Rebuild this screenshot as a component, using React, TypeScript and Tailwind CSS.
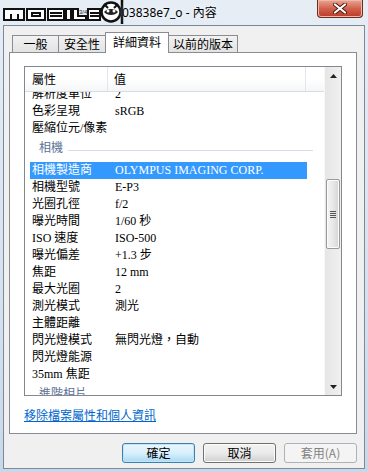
import React from "react";

const CJK = '"Noto Sans CJK TC", "Noto Sans", sans-serif';
const LIST = '"Liberation Serif", "Noto Sans CJK TC", serif';

const rows: [string, string][] = [
  ["解析度單位", "2"],
  ["色彩呈現", "sRGB"],
  ["壓縮位元/像素", ""],
];
const camera: [string, string][] = [
  ["相機製造商", "OLYMPUS IMAGING CORP."],
  ["相機型號", "E-P3"],
  ["光圈孔徑", "f/2"],
  ["曝光時間", "1/60 秒"],
  ["ISO 速度", "ISO-500"],
  ["曝光偏差", "+1.3 步"],
  ["焦距", "12 mm"],
  ["最大光圈", "2"],
  ["測光模式", "測光"],
  ["主體距離", ""],
  ["閃光燈模式", "無閃光燈，自動"],
  ["閃光燈能源", ""],
  ["35mm 焦距", ""],
];

function Row({ name, value, selected }: { name: string; value: string; selected?: boolean }) {
  return (
    <div
      className={
        "ml-[5px] flex h-[17px] w-[277px] items-center whitespace-nowrap text-[12px] leading-[17px] " +
        (selected ? "bg-[#3399ff] text-white" : "text-black")
      }
    >
      <div className="w-[78px] pl-[2px]">{name}</div>
      <div className="pl-[7px]">{value}</div>
    </div>
  );
}

function Group({ label }: { label: string }) {
  return (
    <div className="flex h-[25px] items-center pb-[3px] pl-[14px] pr-[11px]">
      <span className="text-[12px] leading-[17px] text-[#5d7396]">{label}</span>
      <div className="ml-[5px] mt-[4px] h-px flex-1 bg-[#d3dce8]" />
    </div>
  );
}

function Logo() {
  return (
    <svg width="126" height="25" viewBox="0 0 126 25" className="block">
      <g fill="#fff" stroke="#111" strokeWidth="2">
        <rect x="4" y="9" width="20" height="11" />
        <rect x="27" y="9" width="18" height="11" />
        <rect x="48" y="9" width="16" height="11" />
        <rect x="66" y="9" width="5" height="11" />
        <path d="M73 9h5v7h8v4h-13z" />
        <rect x="88" y="9" width="12" height="11" />
      </g>
      <g stroke="#111" strokeWidth="2" fill="none">
        <path d="M11 20v-6M18 20v-6" />
        <rect x="32" y="13" width="8" height="3" fill="#fff" />
        <path d="M50 13h12M50 16h12" />
        <path d="M90 13h10M90 16h10" />
      </g>
      <text x="79" y="14" fontSize="6" fill="#333" fontFamily="Liberation Sans, sans-serif">3/4</text>
      <circle cx="111" cy="12" r="9.5" fill="#fff" stroke="#111" strokeWidth="2.5" />
      <path d="M104 12c3-4 11-4 14 0c-3 4-11 4-14 0z" fill="#222" />
      <circle cx="108" cy="11" r="1.5" fill="#fff" />
      <circle cx="114" cy="11" r="1.5" fill="#fff" />
      <path d="M104 4l4 4M118 4l-4 4" stroke="#111" strokeWidth="2" />
      <path d="M122 0v24" stroke="#111" strokeWidth="2.5" />
    </svg>
  );
}

function Btn({ children, variant }: { children: React.ReactNode; variant?: "default" | "disabled" }) {
  const cls =
    variant === "default"
      ? "border-[#3c7fb1] bg-gradient-to-b from-[#eaf6fd] via-[#d9f0fc] to-[#a7d9f5] text-black shadow-[inset_0_0_0_1px_#bfe6f9]"
      : variant === "disabled"
      ? "border-[#adb2b5] bg-[#f4f4f4] text-[#838383]"
      : "border-[#707070] bg-gradient-to-b from-[#f2f2f2] via-[#ebebeb] to-[#cfcfcf] text-black shadow-[inset_0_0_0_1px_#fcfcfc]";
  return (
    <div
      className={
        "flex h-[20px] w-[73px] items-center justify-center rounded-[3px] border text-[12px] leading-none " + cls
      }
    >
      {children}
    </div>
  );
}

export default function App() {
  return (
    <div
      className="flex h-[472px] w-[368px] flex-col overflow-hidden bg-gradient-to-b from-[#e6edf5] via-[#d9e4ef] to-[#c9d8e8]"
      style={{ fontFamily: CJK }}
    >
      {/* title bar */}
      <div className="flex h-[25px] shrink-0 items-start">
        <div className="flex items-center">
          <Logo />
          <span
            className="-ml-[4px] text-[12px] leading-[25px] text-black"
            style={{ fontFamily: '"Noto Sans", "Noto Sans CJK TC", sans-serif', textShadow: "0 0 6px #fff" }}
          >
            03838e7_o - 內容
          </span>
        </div>
        <div className="ml-auto mr-[5px] flex h-[18px] w-[46px] items-center justify-center rounded-b-[4px] border border-t-0 border-[#6d2b20] bg-gradient-to-b from-[#e8a595] via-[#d2624d] to-[#b83a26] shadow-[inset_0_0_0_1px_#f0b8a8]">
          <svg width="14" height="11" viewBox="0 0 14 11">
            <path d="M2 1.5l10 8M12 1.5l-10 8" stroke="#4a1a12" strokeWidth="4" strokeLinecap="round" />
            <path d="M2 1.5l10 8M12 1.5l-10 8" stroke="#fff" strokeWidth="2.2" strokeLinecap="round" />
          </svg>
        </div>
      </div>

      {/* client */}
      <div className="mx-[3px] mb-[3px] flex flex-1 flex-col border border-[#7a8a9c] bg-[#f0f0f0]">
        {/* tabs */}
        <div className="flex h-[26px] items-end pl-[8px]">
          <div className="flex h-[17px] w-[47px] items-center justify-center border border-b-0 border-[#898c95] bg-gradient-to-b from-[#f2f2f2] to-[#e3e3e3] text-[12px] leading-none">
            一般
          </div>
          <div className="-ml-px flex h-[17px] w-[48px] items-center justify-center border border-b-0 border-[#898c95] bg-gradient-to-b from-[#f2f2f2] to-[#e3e3e3] text-[12px] leading-none">
            安全性
          </div>
          <div className="relative z-10 -mb-px -ml-px flex h-[21px] w-[64px] items-center justify-center border border-b-0 border-[#898c95] bg-white pb-[2px] text-[12px] leading-none">
            詳細資料
          </div>
          <div className="-ml-px flex h-[17px] w-[70px] items-center justify-center border border-b-0 border-[#898c95] bg-gradient-to-b from-[#f2f2f2] to-[#e3e3e3] text-[12px] leading-none">
            以前的版本
          </div>
        </div>

        {/* panel */}
        <div className="ml-[5px] flex h-[382px] w-[348px] flex-col border border-[#898c95] bg-white">
          <div className="ml-[14px] mt-[13px] flex h-[330px] w-[318px] border border-[#828790] bg-white" style={{ fontFamily: LIST }}>
            <div className="flex min-w-0 flex-1 flex-col">
              {/* header */}
              <div className="flex h-[25px] shrink-0 items-center border-b border-[#d5dce5] bg-gradient-to-b from-white via-white to-[#f5f6f7] text-[12px]" style={{ fontFamily: CJK }}>
                <div className="flex h-full w-[83px] items-center border-r border-[#e3e6ea] pl-[7px]">屬性</div>
                <div className="flex h-full w-[198px] items-center border-r border-[#e3e6ea] pl-[6px]">值</div>
              </div>
              {/* body */}
              <div className="flex-1 overflow-hidden">
                <div className="-mt-[6px]">
                  {rows.map(([n, v]) => (
                    <Row key={n} name={n} value={v} />
                  ))}
                  <Group label="相機" />
                  {camera.map(([n, v], i) => (
                    <Row key={n} name={n} value={v} selected={i === 0} />
                  ))}
                  <Group label="進階相片" />
                </div>
              </div>
            </div>
            {/* scrollbar */}
            <div className="flex w-[17px] shrink-0 flex-col border-l border-[#f8f8f8] bg-gradient-to-r from-[#e6e6e6] to-[#f0f0f0]">
              <div className="flex h-[17px] items-center justify-center">
                <svg width="7" height="4" viewBox="0 0 7 4">
                  <path d="M0 4L3.5 0L7 4z" fill="#222" />
                </svg>
              </div>
              <div className="h-[95px]" />
              <div className="mx-px flex h-[70px] items-center justify-center rounded-[2px] border border-[#9a9a9a] bg-gradient-to-r from-[#f4f4f4] via-[#e8e8e8] to-[#d5d5d5] shadow-[inset_0_0_0_1px_#fbfbfb]">
                <div className="flex flex-col gap-[1px]">
                  <div className="h-px w-[6px] bg-[#555]" />
                  <div className="h-px w-[6px] bg-[#555]" />
                  <div className="h-px w-[6px] bg-[#555]" />
                  <div className="h-px w-[6px] bg-[#555]" />
                </div>
              </div>
              <div className="flex-1" />
              <div className="flex h-[17px] items-center justify-center">
                <svg width="7" height="4" viewBox="0 0 7 4">
                  <path d="M0 0L3.5 4L7 0z" fill="#222" />
                </svg>
              </div>
            </div>
          </div>
          <div className="ml-[14px] mt-[11px] text-[12px] leading-[15px] text-[#0066cc] underline">
            移除檔案屬性和個人資訊
          </div>
        </div>

        {/* buttons */}
        <div className="ml-[118px] mt-[9px] flex gap-[8px]">
          <Btn variant="default">確定</Btn>
          <Btn>取消</Btn>
          <Btn variant="disabled">套用(A)</Btn>
        </div>
      </div>
    </div>
  );
}
